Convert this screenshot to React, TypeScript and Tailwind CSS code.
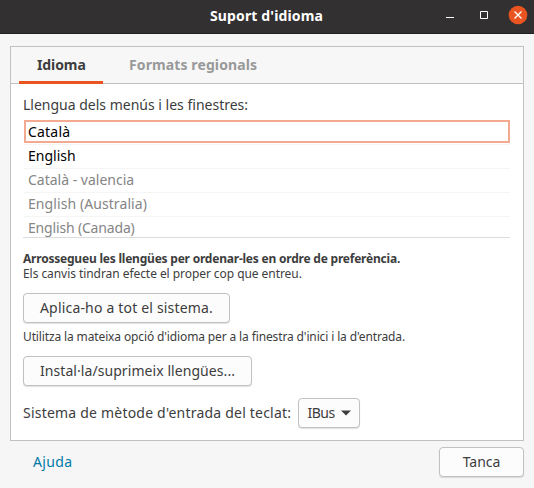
import type { ReactNode } from 'react';

const languages = [
  { name: 'English', style: 'text-black' },
  { name: 'Català - valencia', style: 'text-[#858585]' },
  { name: 'English (Australia)', style: 'text-[#858585] tracking-[0.08px]' },
  { name: 'English (Canada)', style: 'text-[#858585] tracking-[-0.17px]' },
];

function Button({ className, children }: { className: string; children: ReactNode }) {
  return (
    <button
      className={`flex h-[30px] shrink-0 items-center justify-center rounded-[4px] border border-[#c1c1c1] bg-[#fcfcfc] shadow-[0_1px_1px_rgba(0,0,0,0.12)] ${className}`}
    >
      {children}
    </button>
  );
}

export default function App() {
  return (
    <div className="flex h-[488px] w-[534px] flex-col overflow-hidden bg-[#f6f6f6] font-['Noto_Sans',sans-serif] text-[14px] leading-5 whitespace-nowrap text-[#3d3d3d]">
      <header className="flex h-[34px] shrink-0 items-center border-b border-[#231f20] bg-[#333031] pb-1 pl-[210px] text-white">
        <h1 className="w-[236px] pt-[2px] font-bold tracking-[0.14px]">Suport d'idioma</h1>
        <svg width="82" height="30" viewBox="0 0 82 30" fill="none">
          <path d="M0 17.5h8" stroke="#fff" />
          <path d="M34.5 11.5h7v7h-7z" stroke="#fff" />
          <circle cx="72" cy="15" r="9.3" fill="#e95420" />
          <path d="M68.5 11.5l7 7M75.5 11.5l-7 7" stroke="#fff" strokeWidth="1.4" />
        </svg>
      </header>

      <main className="mx-[10px] mt-3 flex h-[395px] shrink-0 flex-col border border-[#c1c1c1] bg-white">
        <nav className="flex h-[37px] shrink-0 border-b border-[#c1c1c1] bg-[#f7f7f7] pl-2 font-bold">
          <div className="h-[37px] w-[84px] border-b-3 border-[#e95420] pt-2 pl-[18px] tracking-[-0.1px]">Idioma</div>
          <div className="pt-2 pl-[26px] tracking-[0.11px] text-[#999]">Formats regionals</div>
        </nav>

        <section className="flex flex-col pl-3">
          <p className="mt-[11px]">Llengua dels menús i les finestres:</p>
          <div className="mt-[5px] flex h-[118px] w-[487px] flex-col overflow-hidden border-b border-[#dcdcdc] pl-px">
            <div className="flex h-[23px] shrink-0 items-center border-2 border-[#f4aa90] pl-[2px] tracking-[0.2px] text-black">
              Català
            </div>
            <div className="h-px shrink-0" />
            {languages.map((language) => (
              <div key={language.name} className={`h-6 shrink-0 border-t border-[#f5f5f5] pt-px pl-1 ${language.style}`}>
                {language.name}
              </div>
            ))}
          </div>
          <p className="mt-[13px] text-[12px] leading-[15px] font-bold tracking-[-0.215px]">
            Arrossegueu les llengües per ordenar-les en ordre de preferència.
          </p>
          <p className="text-[12px] leading-[15px] tracking-[-0.06px]">
            Els canvis tindran efecte el proper cop que entreu.
          </p>
          <Button className="mt-3 w-[207px] tracking-[0.18px]">Aplica-ho a tot el sistema.</Button>
          <p className="mt-[6px] text-[12px] leading-[15px] tracking-[-0.13px]">
            Utilitza la mateixa opció d'idioma per a la finestra d'inici i la d'entrada.
          </p>
          <Button className="mt-3 w-[229px] tracking-[0.07px]">Instal·la/suprimeix llengües...</Button>
          <div className="mt-3 flex items-center">
            <span className="w-[275px] tracking-[0.21px]">Sistema de mètode d'entrada del teclat:</span>
            <Button className="w-[62px] gap-[6px]">
              <span className="w-[27px] text-left tracking-[-0.5px]">IBus</span>
              <svg width="10" height="6" viewBox="0 0 10 6" fill="#3d3d3d">
                <path d="M0 0.5h10L5 5.5z" />
              </svg>
            </Button>
          </div>
        </section>
      </main>

      <footer className="mt-[6px] flex h-[30px] items-center justify-between pr-[10px] pl-[33px]">
        <a className="tracking-[0.35px] text-[#007aa6]">Ajuda</a>
        <Button className="w-[85px]">Tanca</Button>
      </footer>
    </div>
  );
}
